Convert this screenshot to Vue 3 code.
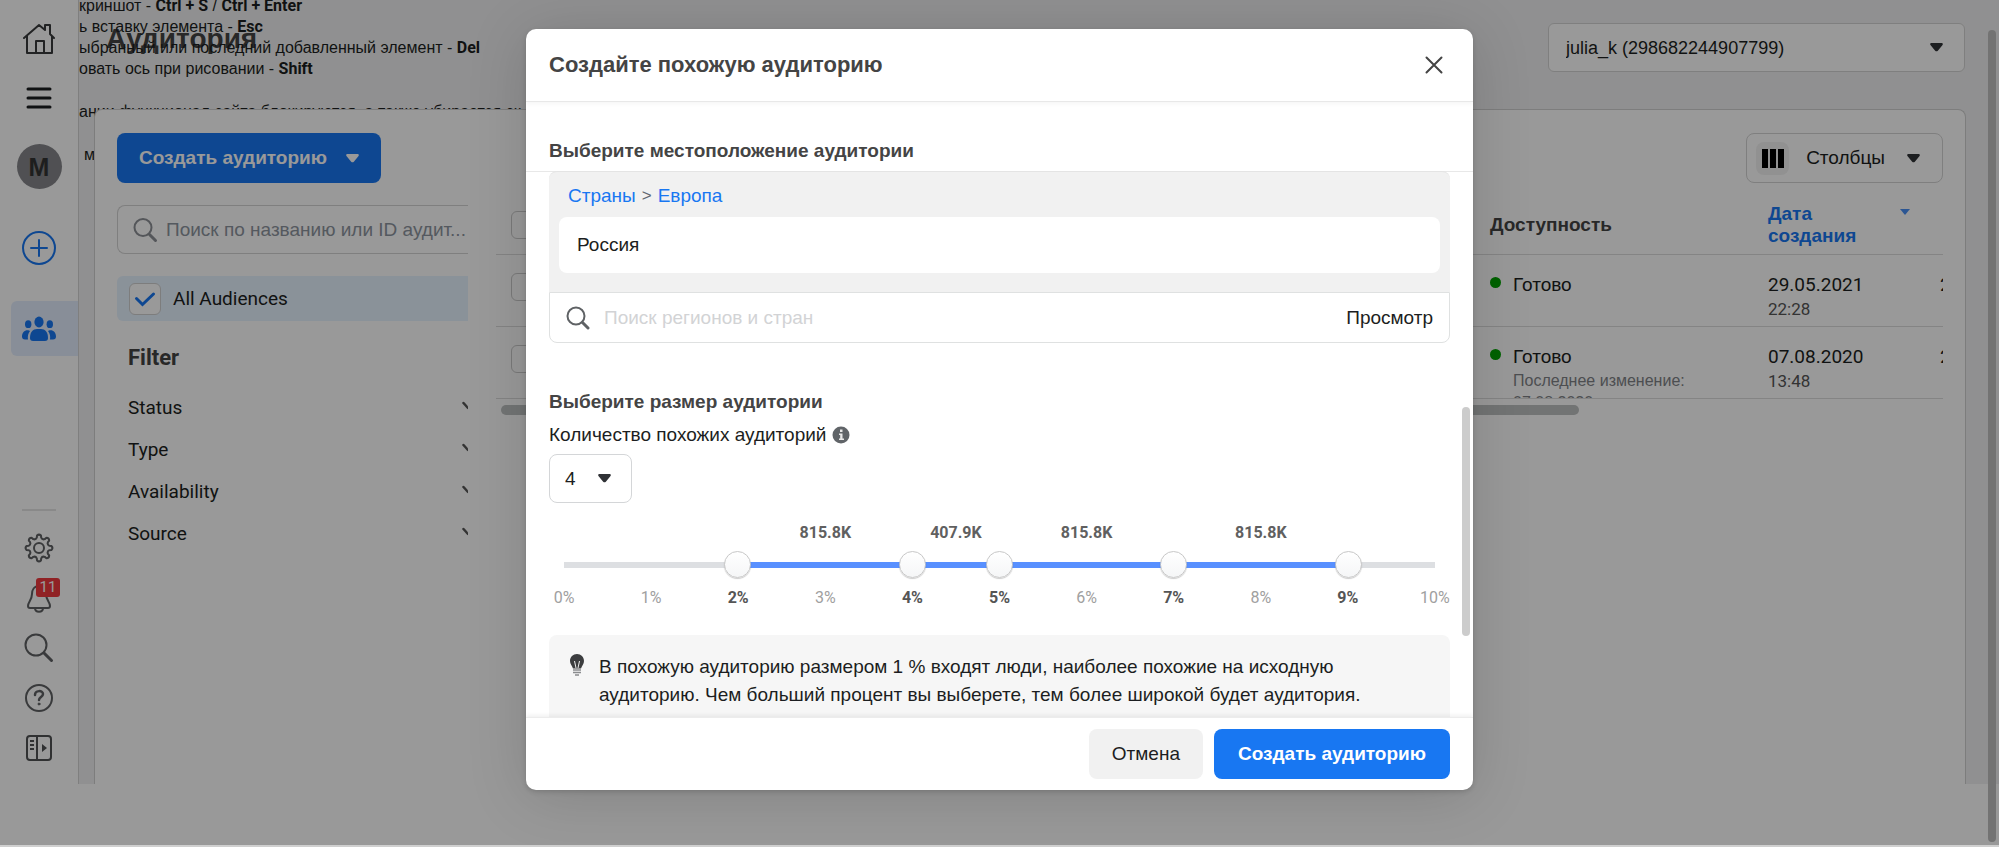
<script setup>
import { ref } from 'vue'

const hints = [
  { text: 'криншот - ', keys: 'Ctrl + S', join: ' / ', more: 'Ctrl + Enter' },
  { text: 'ь вставку элемента - ', keys: 'Esc' },
  { text: 'ыбранный или последний добавленный элемент - ', keys: 'Del' },
  { text: 'овать ось при рисовании - ', keys: 'Shift' },
]
const filters = ['Status', 'Type', 'Availability', 'Source']
const rows = [
  { state: 'Готово', note: '', changed: '', date: '29.05.2021', time: '22:28' },
  { state: 'Готово', note: 'Последнее изменение:', changed: '07.08.2020', date: '07.08.2020', time: '13:48' },
]
const points = ref([2, 4, 5, 7, 9])
const segments = [
  { size: 2, label: '', on: false },
  { size: 2, label: '815.8K', on: true },
  { size: 1, label: '407.9K', on: true },
  { size: 2, label: '815.8K', on: true },
  { size: 2, label: '815.8K', on: true },
  { size: 1, label: '', on: false },
]

const polar = (deg, r) => {
  const a = (deg * Math.PI) / 180
  return `${(15 + r * Math.sin(a)).toFixed(2)} ${(15 - r * Math.cos(a)).toFixed(2)}`
}
let gear = ''
for (let i = 0; i < 8; i++) {
  const t = i * 45
  gear += `${i ? 'L' : 'M'}${polar(t - 9, 12.6)} Q${polar(t, 14.4)} ${polar(t + 9, 12.6)} L${polar(t + 12, 10.6)} Q${polar(t + 22.5, 8.6)} ${polar(t + 33, 10.6)} `
}
gear += 'Z'
</script>

<template>
  <div class="page">
    <div class="shell">
      <nav class="rail">
        <a class="rail-item home" href="#" aria-label="Home">
          <svg width="32" height="32" viewBox="0 0 32 32" fill="none" stroke="#3a3b3d" stroke-width="2" stroke-linejoin="round" stroke-linecap="round"><path d="M1 15 16 2l6 5V2h5v9l4 4M4 13v17h25V13M13 30V18h8v12" /></svg>
        </a>
        <button class="rail-item menu" aria-label="Menu">
          <svg width="28" height="24" viewBox="0 0 28 24" stroke="#1c1e21" stroke-width="3" stroke-linecap="round"><path d="M3 3h22M3 12h22M3 21h22" /></svg>
        </button>
        <a class="rail-item avatar" href="#">М</a>
        <button class="rail-item add" aria-label="Add">
          <svg width="34" height="34" viewBox="0 0 34 34" fill="none" stroke="#1877f2" stroke-width="2" stroke-linecap="round"><circle cx="17" cy="17" r="16" /><path d="M17 9v16M9 17h16" /></svg>
        </button>
        <a class="rail-item people" href="#" aria-label="Audiences">
          <svg width="34" height="26" viewBox="0 0 34 26" fill="#1877f2"><ellipse cx="17" cy="6" rx="4.600" ry="5.400" /><path d="M8 22c0-6 3-9 7-9h4c4 0 7 3 7 9 0 2-1 3-3 3H11c-2 0-3-1-3-3z" /><ellipse cx="6.200" cy="8.200" rx="3.200" ry="3.900" /><ellipse cx="27.800" cy="8.200" rx="3.200" ry="3.900" /><path d="M7 14.500c-4-1-7 2-7 6 0 2 1 3 3 3h3c-.5-3 0-6 2-8.500zM27 14.500c4-1 7 2 7 6 0 2-1 3-3 3h-3c.5-3 0-6-2-8.500z" /></svg>
        </a>
        <div class="rail-bottom">
          <button class="tool" aria-label="Settings">
            <svg width="30" height="30" viewBox="0 0 30 30" fill="none" stroke="#606264" stroke-width="2" stroke-linejoin="round"><path :d="gear" /><circle cx="15" cy="15" r="5" /></svg>
          </button>
          <button class="tool bell" aria-label="Notifications">
            <svg width="30" height="30" viewBox="0 0 30 30" fill="none" stroke="#606264" stroke-width="2" stroke-linejoin="round"><path d="M15 3c-5 0-7 4-7 8 0 6-4 8-4 12 0 1 1 2 2 2h18c1 0 2-1 2-2 0-4-4-6-4-12 0-4-2-8-7-8zM11 25c0 5 8 5 8 0" /></svg>
            <span class="badge">11</span>
          </button>
          <button class="tool" aria-label="Search">
            <svg width="30" height="30" viewBox="0 0 30 30" fill="none" stroke="#606264" stroke-width="2" stroke-linecap="round"><circle cx="12" cy="12" r="10.500" /><path d="m20 20 7.500 7.500" stroke-width="3" /></svg>
          </button>
          <button class="tool" aria-label="Help">
            <svg width="30" height="30" viewBox="0 0 30 30" fill="none" stroke="#606264" stroke-width="2" stroke-linecap="round"><circle cx="15" cy="15" r="13" /><path d="M11 12c0-5 8-5 8-1 0 3-4 3-4 6" stroke-width="2.500" /><circle cx="15" cy="21" r="1" fill="#606264" stroke-width="1" /></svg>
          </button>
          <button class="tool" aria-label="Expand">
            <svg width="30" height="30" viewBox="0 0 30 30" fill="none" stroke="#505254" stroke-width="2"><rect x="3" y="3" width="24" height="24" rx="3" /><path d="M13 3v24M6 8h4M6 12h4M6 16h4" /><path d="m18 11 5 4-5 4z" fill="#505254" stroke="none" /></svg>
          </button>
        </div>
      </nav>

      <main class="main">
        <div class="hints">
          <p v-for="h in hints" :key="h.keys">{{ h.text }}<b>{{ h.keys }}</b>{{ h.join }}<b v-if="h.more">{{ h.more }}</b></p>
          <p class="hint-gap">ании функционал сайта блокируются, а также убирается ск</p>
          <p class="hint-gap hint-in">м</p>
        </div>

        <header class="top">
          <h1>Аудитория</h1>
          <label class="account">
            <select aria-label="Account"><option>julia_k (298682244907799)</option></select>
            <svg class="caret" viewBox="0 0 14 10"><path d="M1.500 0h11c1.500 0 2 1.500 1 2.500L8.500 8.500c-1 1-2 1-3 0L.5 2.500C-.5 1.500 0 0 1.500 0z" /></svg>
          </label>
        </header>

        <section class="panel">
          <div class="actions">
            <button class="primary create">Создать аудиторию
              <svg class="caret" viewBox="0 0 14 10"><path d="M1.500 0h11c1.500 0 2 1.500 1 2.500L8.500 8.500c-1 1-2 1-3 0L.5 2.500C-.5 1.500 0 0 1.500 0z" /></svg>
            </button>
            <button class="columns">
              <span class="bars"><i></i><i></i><i></i></span>
              <span>Столбцы</span>
              <svg class="caret" viewBox="0 0 14 10"><path d="M1.500 0h11c1.500 0 2 1.500 1 2.500L8.500 8.500c-1 1-2 1-3 0L.5 2.500C-.5 1.500 0 0 1.500 0z" /></svg>
            </button>
          </div>

          <div class="work">
            <aside class="side">
              <label class="find">
                <svg width="26" height="26" viewBox="0 0 26 26" fill="none" stroke="#8d9096" stroke-width="2" stroke-linecap="round"><circle cx="11" cy="10.500" r="8.500" /><path d="m17.500 17.500 6 6" stroke-width="3" /></svg>
                <input type="text" placeholder="Поиск по названию или ID аудит..." aria-label="Поиск аудитории" />
              </label>
              <label class="all">
                <input type="checkbox" checked />
                <svg width="32" height="32" viewBox="0 0 32 32" fill="none" stroke="#1877f2" stroke-width="3" stroke-linecap="round"><path d="m7.500 15.500 6 6 11-10.500" /></svg>
                <span>All Audiences</span>
              </label>
              <h2>Filter</h2>
              <ul>
                <li v-for="f in filters" :key="f">
                  <button>{{ f }}
                    <svg width="6" height="18" viewBox="0 0 6 18" stroke="#555" stroke-width="2.500" fill="none" stroke-linecap="round"><path d="m1.500 4 4.500 5" /></svg>
                  </button>
                </li>
              </ul>
            </aside>

            <div class="table-wrap">
              <table>
                <colgroup><col class="c-check" /><col /><col class="c-state" /><col class="c-date" /><col class="c-last" /></colgroup>
                <thead>
                  <tr>
                    <th><input type="checkbox" aria-label="Выбрать все" /></th>
                    <th></th>
                    <th>Доступность</th>
                    <th class="sorted"><div class="sort"><a href="#">Дата<br />создания</a><svg width="10" height="6" viewBox="0 0 10 6"><path d="M0 0h10L5 6z" /></svg></div></th>
                    <th></th>
                  </tr>
                </thead>
                <tbody>
                  <tr v-for="r in rows" :key="r.date">
                    <td><input type="checkbox" aria-label="Выбрать" /></td>
                    <td></td>
                    <td><div class="cell state"><i class="dot"></i><div>{{ r.state }}<small>{{ r.note }}<br v-if="r.note" />{{ r.changed }}</small></div></div></td>
                    <td><div class="cell num">{{ r.date }}<small>{{ r.time }}</small></div></td>
                    <td><div class="cell num">2</div></td>
                  </tr>
                </tbody>
              </table>
              <div class="h-scroll"></div>
            </div>
          </div>
        </section>
      </main>
    </div>
    <div class="page-scroll"></div>

    <div class="overlay">
      <div class="dialog" role="dialog" aria-labelledby="dialog-title">
        <header class="dialog-head">
          <h2 id="dialog-title">Создайте похожую аудиторию</h2>
          <button class="close" aria-label="Закрыть">
            <svg width="18" height="18" viewBox="0 0 18 18" stroke="#444" stroke-width="2" stroke-linecap="round"><path d="m1.500 1.500 15 15M16.500 1.500l-15 15" /></svg>
          </button>
        </header>

        <div class="dialog-body">
          <h3 class="place-title">Выберите местоположение аудитории</h3>
          <div class="place">
            <div class="chosen">
              <div class="crumbs"><a href="#">Страны</a><span>&gt;</span><a href="#">Европа</a></div>
              <div class="country">Россия</div>
            </div>
            <div class="region">
              <svg width="24" height="24" viewBox="0 0 24 24" fill="none" stroke="#5f6265" stroke-width="2" stroke-linecap="round"><circle cx="10" cy="10" r="8.500" /><path d="m16.500 16.500 5.500 5.500" stroke-width="3" /></svg>
              <input type="text" placeholder="Поиск регионов и стран" aria-label="Поиск регионов и стран" />
              <button>Просмотр</button>
            </div>
          </div>

          <h3 class="size-title">Выберите размер аудитории</h3>
          <div class="count-label">
            <label for="count">Количество похожих аудиторий</label>
            <svg width="18" height="18" viewBox="0 0 18 18"><circle cx="9" cy="9" r="8.500" fill="#606468" /><path d="M8 3.500h2.500v2.500H8zM7 7.500h3.500v5H12v1.500H7v-1.500h1.200V9H7z" fill="#e8e8e8" /></svg>
          </div>
          <div class="count">
            <select id="count"><option>4</option></select>
            <svg class="caret" viewBox="0 0 14 10"><path d="M1.500 0h11c1.500 0 2 1.500 1 2.500L8.500 8.500c-1 1-2 1-3 0L.5 2.500C-.5 1.500 0 0 1.500 0z" /></svg>
          </div>

          <div class="scale">
            <div class="parts values"><span v-for="(s, i) in segments" :key="i">{{ s.label }}</span></div>
            <div class="slider">
              <div class="parts track"><span v-for="(s, i) in segments" :key="i" :class="{ on: s.on }"></span></div>
              <input v-for="(p, i) in points" :key="i" v-model.number="points[i]" type="range" min="0" max="10" :aria-label="'Граница ' + (i + 1)" />
            </div>
            <div class="marks"><span v-for="n in 11" :key="n" :class="{ hit: points.includes(n - 1) }">{{ n - 1 }}%</span></div>
          </div>

          <div class="tip">
            <svg width="14" height="24" viewBox="0 0 14 24"><path d="M7 1C3 1 0 4 0 8c0 3 2 4.500 3 7.500h8c1-3 3-4.500 3-7.500 0-4-3-7-7-7z" fill="#3c3d3f" /><path d="M4.500 8 6 15M9.500 8 8 15" stroke="#f0f0f0" fill="none" /><path d="M3 17h8M3 19.500h8M5 22h4" stroke="#8a8c8e" stroke-width="1.500" /></svg>
            <p>В похожую аудиторию размером 1 % входят люди, наиболее похожие на исходную аудиторию. Чем больший процент вы выберете, тем более широкой будет аудитория.</p>
          </div>
          <div class="body-scroll"></div>
        </div>

        <footer class="dialog-foot">
          <button class="cancel">Отмена</button>
          <button class="primary">Создать аудиторию</button>
        </footer>
      </div>
    </div>
  </div>
</template>

<style>
body { background: #cfcfcf; }
</style>

<style scoped>
* { box-sizing: border-box; }
.page { height: calc(100vh - 2px); min-height: 600px; background: #fff; overflow: hidden; position: relative; font: 19px/24px "Liberation Sans", Arial, sans-serif; color: #1c1e21; }
h1, h2, h3, p, ul { margin: 0; padding: 0; }
ul { list-style: none; }
a { color: #1877f2; text-decoration: none; }
button, input, select { font: inherit; color: inherit; margin: 0; }
button { border: 0; background: none; padding: 0; }
svg { flex: none; display: block; }
.caret { width: 13px; height: 9px; fill: #303236; }

.shell { display: flex; height: calc(100% - 61px); background: #f0f1f2; }
.rail { width: 79px; flex: none; display: flex; flex-direction: column; align-items: center; background: #fff; border-right: 1px solid #d4d4d4; position: relative; z-index: 1; padding-top: 23px; }
.rail-item { display: flex; align-items: center; justify-content: center; }
.menu { margin-top: 31px; }
.avatar { width: 45px; height: 45px; margin-top: 34px; border-radius: 50%; background: #85868a; color: #333; font-weight: bold; font-size: 25px; }
.add { margin-top: 42px; }
.people { align-self: flex-end; width: 67px; height: 55px; margin-top: 36px; background: #e3edfd; border-radius: 6px 0 0 6px; padding-right: 11px; }
.rail-bottom { margin-top: auto; border-top: 2px solid #e4e4e4; width: 34px; display: flex; flex-direction: column; align-items: center; gap: 20px; padding: 22px 0 21px; }
.tool { position: relative; height: 30px; }
.badge { position: absolute; left: 12px; top: -5px; width: 24px; height: 19px; border-radius: 3px; background: #f03a3e; color: #fff; font: 15px/19px Roboto, sans-serif; }

.main { flex: 1; min-width: 0; display: flex; flex-direction: column; position: relative; padding: 0 33px 0 15px; }
.hints { position: absolute; left: 0; top: -5px; font-size: 16px; line-height: 21px; white-space: pre; color: #1c1e21; }
.hints b { font-family: Roboto, sans-serif; }
.hints .hint-gap { margin-top: 22px; }
.hints .hint-in { padding-left: 5px; }
.top { height: 109px; flex: none; display: flex; justify-content: space-between; align-items: flex-start; padding: 23px 1px 0 12px; }
h1 { font-size: 28px; line-height: 32px; color: #444; }
.account { position: relative; width: 417px; }
.account select { width: 100%; height: 49px; appearance: none; border: 1px solid #d4d4d4; border-radius: 6px; background: #fff; padding: 0 60px 0 17px; font-size: 18px; }
.account .caret { position: absolute; right: 22px; top: 20px; }
.panel { flex: 1; min-height: 0; position: relative; background: #fff; border: 1px solid #d0d0d0; border-bottom: 0; border-radius: 8px 8px 0 0; padding: 23px 22px 0; }
.actions { display: flex; justify-content: space-between; }
.primary { height: 50px; border-radius: 8px; background: #1877f2; color: #fff; font-weight: bold; padding: 0 24px; }
.create { display: flex; align-items: center; gap: 19px; padding: 0 22px; }
.create .caret { fill: #fff; }
.columns { height: 50px; display: flex; align-items: center; gap: 17px; border: 1px solid #d4d4d4; border-radius: 8px; padding: 0 22px 0 9px; }
.columns .caret { margin-left: 5px; }
.bars { width: 33px; height: 33px; border-radius: 8px; background: #f2f2f2; display: flex; gap: 2px; align-items: center; justify-content: center; }
.bars i { width: 6px; height: 19px; background: #000; }
.work { display: flex; gap: 28px; }
.side { width: 351px; flex: none; padding-top: 22px; }
.find { display: flex; align-items: center; gap: 8px; height: 49px; border: 1px solid #d4d4d4; border-right: 0; border-radius: 8px 0 0 8px; padding-left: 14px; }
.find input { flex: 1; min-width: 0; height: 40px; border: 0; padding: 0; background: none; }
.find input::placeholder { color: #8d949e; }
.all { display: flex; align-items: center; height: 45px; margin-top: 22px; padding-left: 12px; background: #e7f3ff; border-radius: 6px 0 0 6px; font-family: Roboto, sans-serif; }
.all input { appearance: none; width: 32px; height: 32px; border: 1px solid #d0d0d0; border-radius: 6px; background: #fff; margin-right: 12px; }
.all svg { margin-left: -44px; margin-right: 12px; }
.side h2 { font: bold 22px/28px Roboto, sans-serif; color: #444; margin: 23px 0 15px 11px; }
.side li button { width: 100%; height: 42px; padding-left: 11px; display: flex; justify-content: space-between; align-items: center; font-family: Roboto, sans-serif; }
.table-wrap { flex: 1; min-width: 0; overflow: hidden; padding-top: 15px; }
table { width: 100%; table-layout: fixed; border-collapse: collapse; }
.c-check { width: 60px; }
.c-state { width: 278px; }
.c-date { width: 172px; }
.c-last { width: 3px; }
th, td { padding: 0; text-align: left; border-bottom: 1px solid #dcdcdc; }
th { height: 56px; padding-bottom: 2px; color: #444; line-height: 22px; }
td { height: 72px; vertical-align: top; }
th input, td input { appearance: none; display: block; width: 28px; height: 28px; border: 1px solid #ccc; border-radius: 6px; margin-left: 15px; }
td input { margin-top: 18px; }
.sort { display: flex; justify-content: space-between; padding-right: 30px; }
.sort svg { fill: #4a90f5; margin-top: 6px; }
.cell { margin-top: 18px; height: 53px; overflow: hidden; }
.state { display: flex; gap: 12px; }
.dot { width: 11px; height: 11px; border-radius: 50%; background: #00a400; margin-top: 4px; }
small { display: block; font-size: 17px; line-height: 22px; margin-top: 1px; color: #555; }
.state small { font-size: 16px; color: #808387; }
.num { font-family: Roboto, sans-serif; }
.h-scroll { height: 10px; width: 1078px; margin: 6px 0 0 5px; border-radius: 5px; background: #bfc1c1; }
.page-scroll { position: absolute; right: 3px; top: 30px; bottom: 3px; width: 8px; border-radius: 4px; background: #c0c0c0; }

.overlay { position: absolute; inset: 0; z-index: 2; background: rgba(0, 0, 0, 0.4); display: flex; justify-content: center; padding: 29px 0 55px; }
.dialog { width: 947px; max-width: 100%; display: flex; flex-direction: column; background: #fff; border-radius: 10px; overflow: hidden; box-shadow: 0 6px 60px rgba(0, 0, 0, 0.15), 0 2px 5px rgba(0, 0, 0, 0.15); }
.dialog-head { height: 73px; flex: none; display: flex; align-items: center; justify-content: space-between; padding: 0 30px 0 23px; border-bottom: 1px solid #e8e8e8; box-shadow: 0 2px 4px rgba(0, 0, 0, 0.04); }
.dialog-head h2 { font-size: 22px; color: #444; }
.dialog-body { flex: 1; min-height: 0; overflow: hidden; position: relative; padding: 0 23px; }
h3 { font-size: 19px; color: #444; }
.place-title { margin: 0 -23px; padding: 37px 23px 8px; border-bottom: 1px solid #e8e8e8; }
.place { margin-top: -1px; }
.chosen { background: #f1f1f1; border-top: 1px solid #e4e4e4; border-radius: 8px 8px 0 0; padding: 12px 10px 19px; }
.crumbs { display: flex; gap: 6px; padding-left: 9px; }
.crumbs span { font-size: 17px; color: #606770; }
.country { margin-top: 9px; height: 56px; border-radius: 8px; background: #fff; padding: 16px 18px; }
.region { display: flex; align-items: center; height: 51px; border: 1px solid #dfe1e1; border-radius: 0 0 8px 8px; padding: 0 16px; }
.region input { flex: 1; min-width: 0; border: 0; padding: 0 0 0 14px; }
.region input::placeholder { color: #d2d3d5; }
.size-title { margin-top: 47px; }
.count-label { display: flex; align-items: center; gap: 6px; margin-top: 9px; }
.count { position: relative; width: 83px; margin-top: 7px; }
.count select { display: block; width: 100%; height: 49px; appearance: none; background: #fff; border: 1px solid #d4d6d8; border-radius: 8px; padding: 0 0 0 15px; }
.count .caret { position: absolute; right: 21px; top: 20px; }
.scale { margin: 20px 15px 0; font: 16px/20px Roboto, sans-serif; color: #606060; }
.parts { display: grid; grid-template-columns: 2fr 2fr 1fr 2fr 2fr 1fr; }
.values { text-align: center; font-weight: bold; }
.slider { display: grid; align-items: center; height: 27px; margin: 8px -14px 10px; }
.slider > * { grid-area: 1 / 1; }
.track { margin: 0 14px; height: 6px; background: #dddfe2; }
.track .on { background: #5890ff; }
.slider input { appearance: none; width: 100%; height: 27px; background: none; pointer-events: none; }
.slider input::-webkit-slider-thumb { appearance: none; pointer-events: auto; width: 27px; height: 27px; border-radius: 50%; border: 1px solid #c8c8c8; background: linear-gradient(#fff, #f5f6f7); box-shadow: 0 1px 1px rgba(0, 0, 0, 0.2); }
.marks { display: flex; justify-content: space-between; color: #a0a0a0; }
.marks span { flex: 0 0 0; width: 0; display: flex; justify-content: center; }
.marks .hit { font-weight: bold; color: #555; }
.tip { display: flex; gap: 15px; margin-top: 27px; height: 120px; padding: 18px 60px 0 21px; background: #f6f6f6; border-radius: 8px; }
.tip p { line-height: 28px; }
.body-scroll { position: absolute; right: 3px; top: 305px; width: 8px; height: 229px; border-radius: 4px; background: #ccc; }
.dialog-foot { height: 73px; flex: none; display: flex; justify-content: flex-end; align-items: center; gap: 11px; padding: 0 23px; border-top: 1px solid #ececec; box-shadow: 0 -2px 4px rgba(0, 0, 0, 0.06); position: relative; }
.cancel { height: 50px; padding: 0 23px; border-radius: 8px; background: #f1f1f1; }
</style>
